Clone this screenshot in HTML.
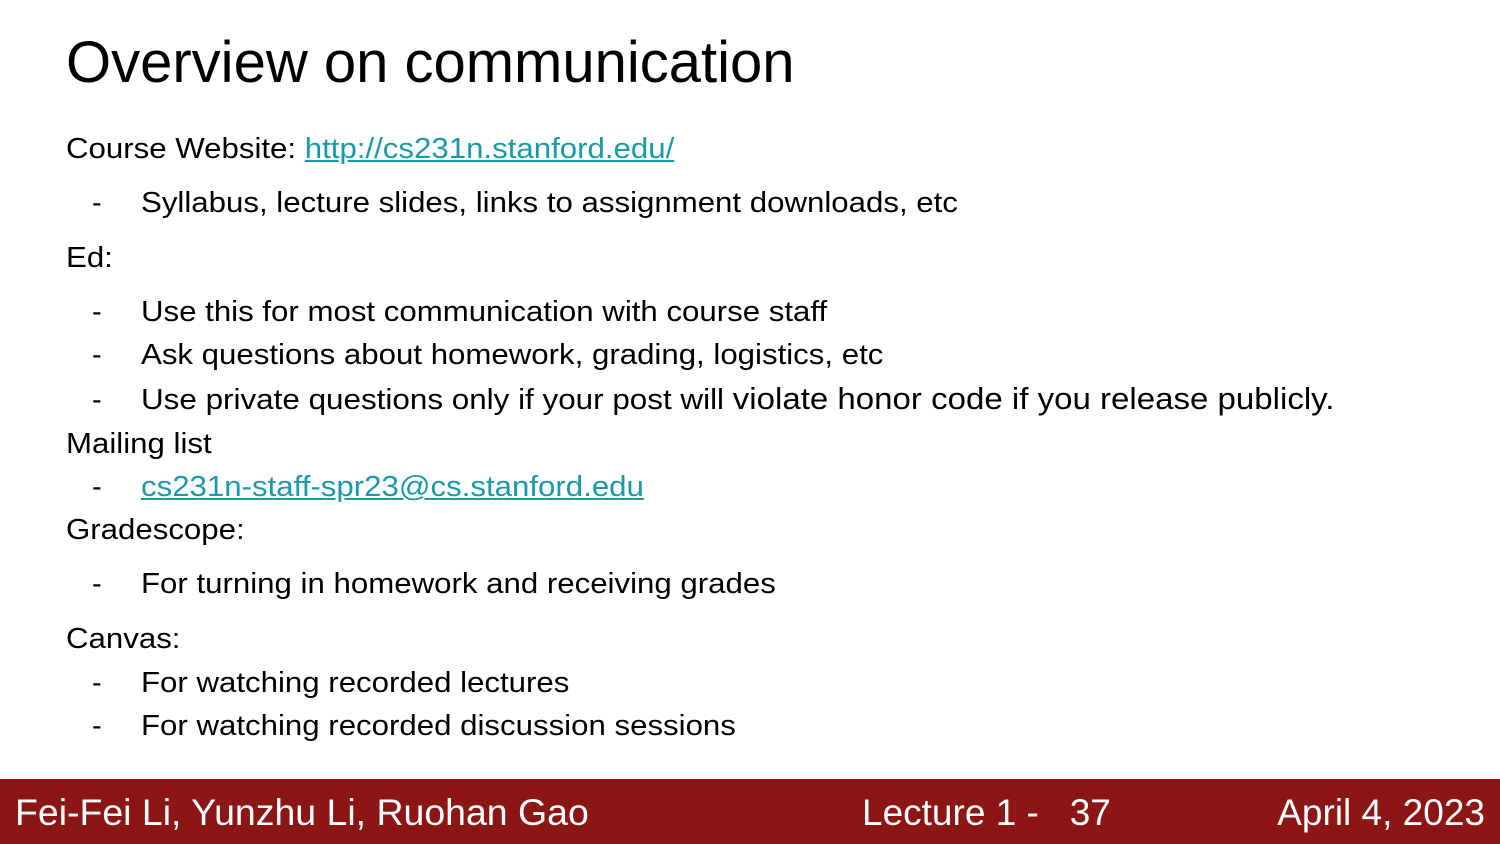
<!DOCTYPE html>
<html><head><meta charset="utf-8"><style>
html,body{margin:0;padding:0;}
body{width:1500px;height:844px;position:relative;background:#fff;overflow:hidden;font-family:"Liberation Sans",Arial,sans-serif;color:#000;}
.t{position:absolute;left:66px;top:28px;font-size:58px;line-height:70px;white-space:nowrap;}
.l{position:absolute;font-size:29px;line-height:34px;white-space:nowrap;transform:scaleX(1.076);transform-origin:0 0;}
.d{position:absolute;left:92px;font-size:29px;line-height:34px;}
a{color:#1a9aa8;text-decoration:underline;}
.f{position:absolute;left:0;top:779px;width:1500px;height:65px;background:#8c1515;color:#fff;font-size:37px;}
.f span{position:absolute;top:13px;line-height:42px;white-space:nowrap;}
</style></head><body>
<div class="t">Overview on communication</div>

<div class="l" style="left:66px;top:132px">Course Website: <a>http://cs231n.stanford.edu/</a></div>
<div class="d" style="top:186px">-</div><div class="l" style="left:141px;top:186px">Syllabus, lecture slides, links to assignment downloads, etc</div>
<div class="l" style="left:66px;top:241px">Ed:</div>
<div class="d" style="top:295px">-</div><div class="l" style="left:141px;top:295px">Use this for most communication with course staff</div>
<div class="d" style="top:338px">-</div><div class="l" style="left:141px;top:338px">Ask questions about homework, grading, logistics, etc</div>
<div class="d" style="top:383px">-</div><div class="l" style="left:141px;top:382px;transform:scaleX(1.083)">Use private questions only if your post will <span style="font-size:30.5px">violate honor code if you release publicly.</span></div>
<div class="l" style="left:66px;top:427px">Mailing list</div>
<div class="d" style="top:470px">-</div><div class="l" style="left:141px;top:470px"><a>cs231n-staff-spr23@cs.stanford.edu</a></div>
<div class="l" style="left:66px;top:513px">Gradescope:</div>
<div class="d" style="top:567px">-</div><div class="l" style="left:141px;top:567px">For turning in homework and receiving grades</div>
<div class="l" style="left:66px;top:622px">Canvas:</div>
<div class="d" style="top:666px">-</div><div class="l" style="left:141px;top:666px">For watching recorded lectures</div>
<div class="d" style="top:709px">-</div><div class="l" style="left:141px;top:709px">For watching recorded discussion sessions</div>

<div class="f">
<span style="left:15px;transform:scaleX(1.012);transform-origin:0 0">Fei-Fei Li, Yunzhu Li, Ruohan Gao</span>
<span style="left:862px">Lecture 1 -&nbsp;&nbsp; 37</span>
<span style="right:15px">April 4, 2023</span>
</div>
</body></html>
